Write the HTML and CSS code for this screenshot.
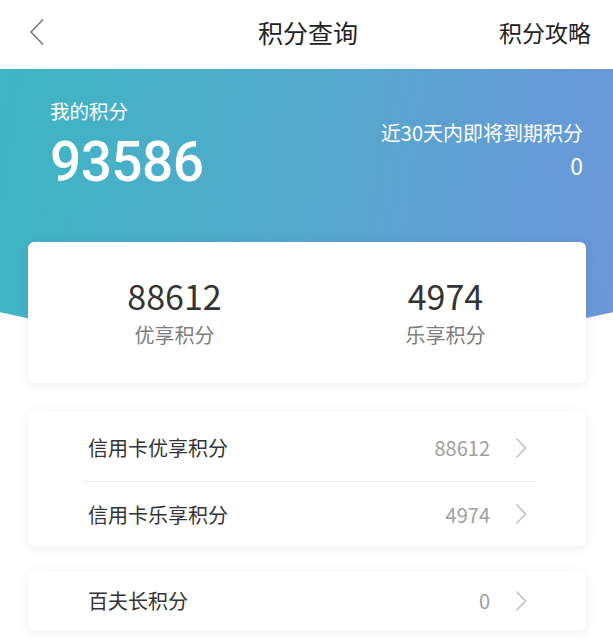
FILE: index.html
```html
<!DOCTYPE html>
<html lang="zh-CN">
<head>
<meta charset="utf-8">
<title>积分查询</title>
<link rel="stylesheet" href="styles.css">
</head>
<body>
<div class="page">
  <header class="topbar">
    <div class="back">
      <svg width="16" height="28" viewBox="0 0 16 28"><polyline points="14,1.5 2,14 14,26.5" fill="none" stroke="#7a7a7a" stroke-width="1.6"/></svg>
    </div>
    <div class="title">积分查询</div>
    <div class="action">积分攻略</div>
  </header>

  <section class="banner">
    <div class="mine">
      <div class="mine-label">我的积分</div>
      <div class="mine-value">93586</div>
    </div>
    <div class="expire">
      <div class="expire-label">近30天内即将到期积分</div>
      <div class="expire-value">0</div>
    </div>
  </section>

  <main class="cards">
    <div class="card summary">
      <div class="col col-left">
        <div class="num">88612</div>
        <div class="cap">优享积分</div>
      </div>
      <div class="col col-right">
        <div class="num">4974</div>
        <div class="cap">乐享积分</div>
      </div>
    </div>

    <div class="card list">
      <div class="row first">
        <span class="label">信用卡优享积分</span>
        <span class="val">88612</span>
        <svg class="chev" width="12" height="22" viewBox="0 0 12 22"><polyline points="1.5,1.5 10.5,11 1.5,20.5" fill="none" stroke="#bdbdbd" stroke-width="1.4"/></svg>
      </div>
      <div class="row last">
        <span class="label">信用卡乐享积分</span>
        <span class="val">4974</span>
        <svg class="chev" width="12" height="22" viewBox="0 0 12 22"><polyline points="1.5,1.5 10.5,11 1.5,20.5" fill="none" stroke="#bdbdbd" stroke-width="1.4"/></svg>
      </div>
    </div>

    <div class="card list single">
      <div class="row">
        <span class="label">百夫长积分</span>
        <span class="val">0</span>
        <svg class="chev" width="12" height="22" viewBox="0 0 12 22"><polyline points="1.5,1.5 10.5,11 1.5,20.5" fill="none" stroke="#bdbdbd" stroke-width="1.4"/></svg>
      </div>
    </div>
  </main>
</div>
</body>
</html>
```

FILE: styles.css
```css
* { box-sizing: border-box; }
html, body {
  margin: 0;
  padding: 0;
  background: #ffffff;
}
body {
  font-family: "Noto Sans CJK SC", "Noto Sans", sans-serif;
  color: #333;
  width: 613px;
  overflow: hidden;
}
.page {
  width: 613px;
  height: 644px;
  overflow: hidden;
}

/* top bar */
.topbar {
  height: 69px;
  display: flex;
  align-items: center;
  padding: 0 22px 5px 29px;
  background: #fff;
}
.back {
  width: 180px;
  display: flex;
  align-items: center;
}
.title {
  flex: 1;
  text-align: center;
  font-size: 25px;
  color: #222;
  padding-right: 4px;
}
.action {
  width: 180px;
  text-align: right;
  font-size: 23px;
  color: #222;
}

/* banner */
.banner {
  height: 290px;
  background: linear-gradient(98deg, #3db5c3 0%, #52aacb 45%, #6c96d9 100%);
  clip-path: ellipse(640px 277px at 50% 0);
  display: flex;
  justify-content: space-between;
  padding: 29px 30px 0 50px;
  color: #fff;
}
.mine-label {
  font-size: 19.5px;
  line-height: 26px;
}
.mine-value {
  font-family: Roboto, "Noto Sans", sans-serif;
  font-size: 55px;
  font-weight: 500;
  line-height: 52px;
  margin-top: 12px;
  letter-spacing: -0.6px;
}
.expire {
  text-align: right;
  padding-top: 20px;
}
.expire-label {
  font-size: 20px;
  line-height: 30px;
}
.expire-value {
  font-size: 23px;
  line-height: 34px;
}

/* cards */
.cards {
  position: relative;
  margin-top: -117px;
  padding: 0 27px 0 28px;
  display: flex;
  flex-direction: column;
}
.card {
  background: #fff;
  border-radius: 6px;
  box-shadow: 0 2px 12px rgba(0, 0, 0, 0.07);
}
.summary {
  height: 141px;
  display: flex;
  align-items: center;
  padding-top: 4px;
}
.col {
  flex: 1;
  text-align: center;
}
.col-left { padding-left: 11px; }
.col-right { padding-right: 5px; }
.num {
  font-size: 34px;
  line-height: 34px;
  margin-bottom: 6px;
  color: #333;
}
.cap {
  font-size: 20px;
  line-height: 32px;
  color: #7d7d7d;
}

.list {
  margin-top: 28px;
  padding: 3px 51px 0 54px;
}
.row {
  height: 66px;
  display: flex;
  align-items: center;
  padding: 0 8px 0 6px;
  border-bottom: 1px solid #ececec;
}
.row.first { height: 68px; }
.row.last { height: 64px; }
.row:last-child { border-bottom: none; }
.label {
  flex: 1;
  font-size: 20px;
  color: #333;
}
.val {
  font-size: 20px;
  color: #a0a0a0;
}
.chev {
  margin-left: 25px;
  display: block;
}
.list.single {
  margin-top: 25px;
  padding-top: 0;
}
.single .row {
  height: 59px;
}
```
